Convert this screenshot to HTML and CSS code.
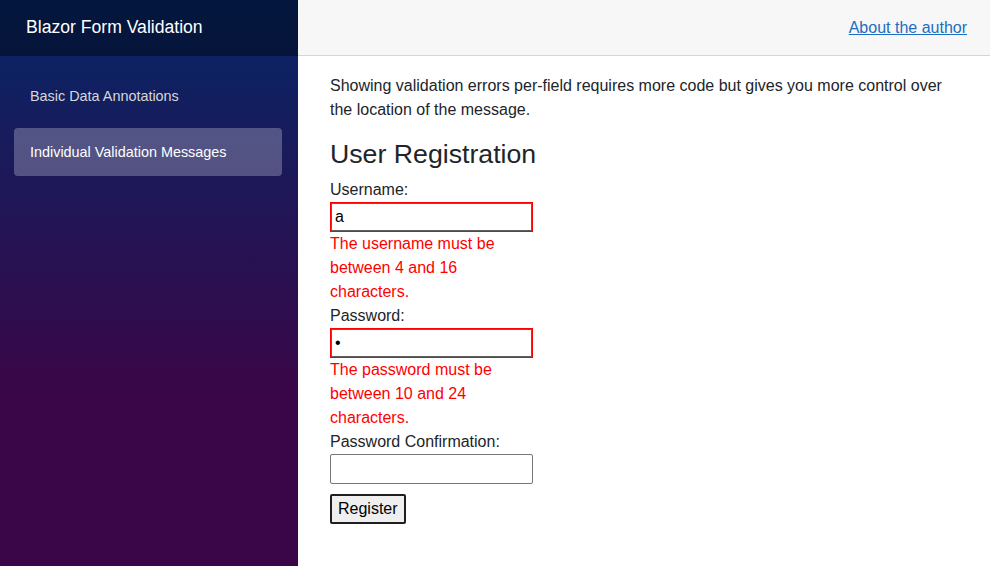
FILE: index.html
```html
<!DOCTYPE html>
<html lang="en">
<head>
<meta charset="utf-8">
<title>Blazor Form Validation</title>
<link rel="stylesheet" href="styles.css">
</head>
<body>
<div class="page">
  <aside class="sidebar">
    <div class="brand-row">
      <span class="brand">Blazor Form Validation</span>
    </div>
    <nav class="nav">
      <a class="nav-link" href="#">Basic Data Annotations</a>
      <a class="nav-link active" href="#">Individual Validation Messages</a>
    </nav>
  </aside>
  <main class="main">
    <div class="top-row">
      <a class="author" href="#">About the author</a>
    </div>
    <article class="content">
      <p class="intro">Showing validation errors per-field requires more code but gives you more control over the location of the message.</p>
      <h3 class="title">User Registration</h3>
      <form class="form">
        <label class="label">Username:</label>
        <input class="field invalid" type="text" value="a">
        <div class="validation-message">The username must be between 4 and 16 characters.</div>
        <label class="label">Password:</label>
        <input class="field invalid" type="password" value="a">
        <div class="validation-message">The password must be between 10 and 24 characters.</div>
        <label class="label">Password Confirmation:</label>
        <input class="field" type="password" value="">
        <div class="actions">
          <button class="btn" type="button">Register</button>
        </div>
      </form>
    </article>
  </main>
</div>
</body>
</html>
```
FILE: styles.css
```css
html, body {
  margin: 0;
  padding: 0;
  height: 100%;
}
body {
  font-family: "Liberation Sans", Arial, Helvetica, sans-serif;
  font-size: 16px;
  line-height: 1.5;
  color: #212529;
  background: #fff;
}
.page {
  display: flex;
  height: 566px;
}
.sidebar {
  width: 298px;
  flex: none;
  background-image: linear-gradient(180deg, rgb(5, 39, 103) 0%, #3a0647 70%);
}
.brand-row {
  height: 56px;
  background: rgba(0, 0, 0, 0.4);
  display: flex;
  align-items: center;
  padding-left: 26px;
}
.brand {
  color: #fff;
  font-size: 17.6px;
  line-height: 1.2;
}
.nav {
  display: flex;
  flex-direction: column;
  gap: 8px;
  padding: 16px 16px 0 14px;
}
.nav-link {
  display: flex;
  align-items: center;
  box-sizing: border-box;
  height: 48px;
  padding: 2px 0 0 16px;
  border-radius: 4px;
  color: #d7d7d7;
  font-size: 14.4px;
  text-decoration: none;
}
.nav-link.active {
  background: rgba(255, 255, 255, 0.25);
  color: #fff;
}
.main {
  flex: 1;
  display: flex;
  flex-direction: column;
}
.top-row {
  height: 55px;
  background: #f7f7f7;
  border-bottom: 1px solid #d6d5d5;
  display: flex;
  align-items: center;
  justify-content: flex-end;
  padding-right: 23px;
}
.author {
  color: #1b6ec2;
  text-decoration: underline;
}
.content {
  padding: 18px 32px 0 32px;
}
.intro {
  margin: 0 0 16px 0;
}
.title {
  margin: 0 0 8px 0;
  font-size: 26.7px;
  font-weight: normal;
  line-height: 32px;
}
.form {
  display: flex;
  flex-direction: column;
  align-items: flex-start;
}
.label {
  display: block;
}
.field {
  box-sizing: border-box;
  width: 203px;
  height: 30px;
  margin: 0;
  padding: 1px 4px;
  border: 1px solid #767676;
  border-radius: 2px;
  font-family: inherit;
  font-size: 16px;
  color: #000;
  background: #fff;
}
.field.invalid {
  border-color: #ff0000;
  border-radius: 0;
  box-shadow: inset 0 0 0 1px #5f5f5f;
}
.validation-message {
  color: #ff0000;
  width: 180px;
}
.actions {
  margin-top: 10px;
}
.btn {
  font-family: inherit;
  font-size: 16px;
  line-height: 24px;
  padding: 1px 6px;
  border: 2px solid #1f1f1f;
  border-radius: 2px;
  background: #efefef;
  color: #000;
}
```
